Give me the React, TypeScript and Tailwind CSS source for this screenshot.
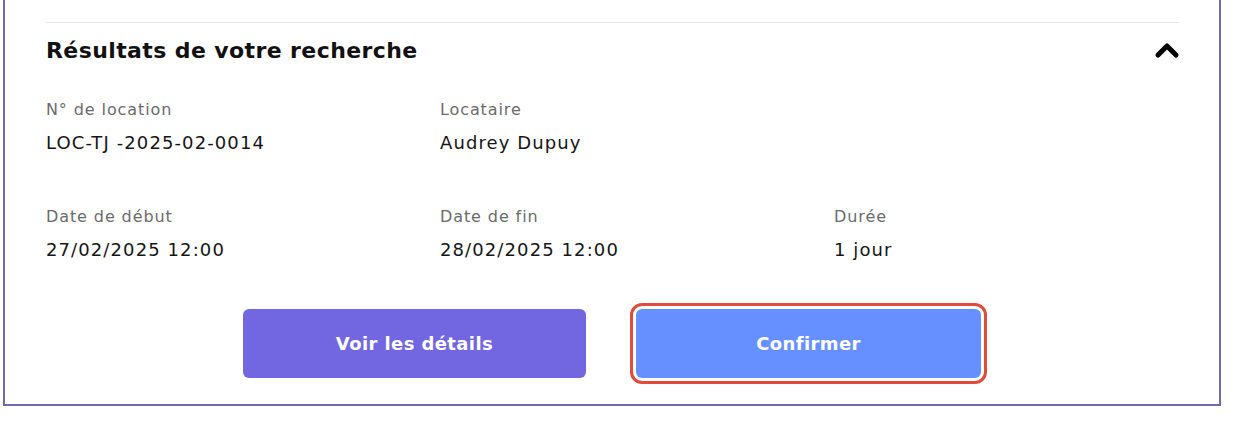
const fields = [
  [
    { label: "N° de location", value: "LOC-TJ -2025-02-0014" },
    { label: "Locataire", value: "Audrey Dupuy" },
  ],
  [
    { label: "Date de début", value: "27/02/2025 12:00" },
    { label: "Date de fin", value: "28/02/2025 12:00" },
    { label: "Durée", value: "1 jour" },
  ],
];

const App: React.FC = () => {
  return (
    <div className="bg-white w-[1236px] h-[423px] font-['DejaVu_Sans',sans-serif]">
      <div className="ml-[3px] w-[1218px] border-x-2 border-b-2 border-[#6e6ba8] pl-[41px] pr-[40px] pt-[22px] pb-[26px]">
        <div className="h-px bg-[#e6e6e6]"></div>
        <div className="h-[54px] flex items-center justify-between">
          <span className="text-[22px] font-bold tracking-[0.4px] text-[#111]">Résultats de votre recherche</span>
          <svg width="26" height="18" viewBox="0 0 26 18" className="mr-[-1px]">
            <polyline points="4,14 13,5 22,14" fill="none" stroke="#000" strokeWidth="5" strokeLinecap="round" strokeLinejoin="round" />
          </svg>
        </div>
        <div className="mt-[23px] flex flex-col gap-[52px]">
          {fields.map((row, i) => (
            <div key={i} className="grid grid-cols-[394px_394px_1fr]">
              {row.map((f) => (
                <div key={f.label} className="flex flex-col gap-[11px]">
                  <span className="text-[16px] leading-[20px] tracking-[0.9px] text-[#6b6b6b]">{f.label}</span>
                  <span className="text-[18px] leading-[24px] tracking-[1.1px] text-[#151515]">{f.value}</span>
                </div>
              ))}
            </div>
          ))}
        </div>
        <div className="mt-[47px] flex justify-center gap-[50px] pr-px">
          <button className="w-[343px] h-[69px] rounded-[6px] bg-[#7366e1] text-white text-[18px] font-bold tracking-[0.4px]">
            Voir les détails
          </button>
          <button className="w-[345px] h-[69px] rounded-[6px] bg-[#6690ff] text-white text-[18px] font-bold tracking-[0.4px] outline-[3px] outline-solid outline-[#e04b3b] outline-offset-[3px]">
            Confirmer
          </button>
        </div>
      </div>
    </div>
  );
};

export default App;
